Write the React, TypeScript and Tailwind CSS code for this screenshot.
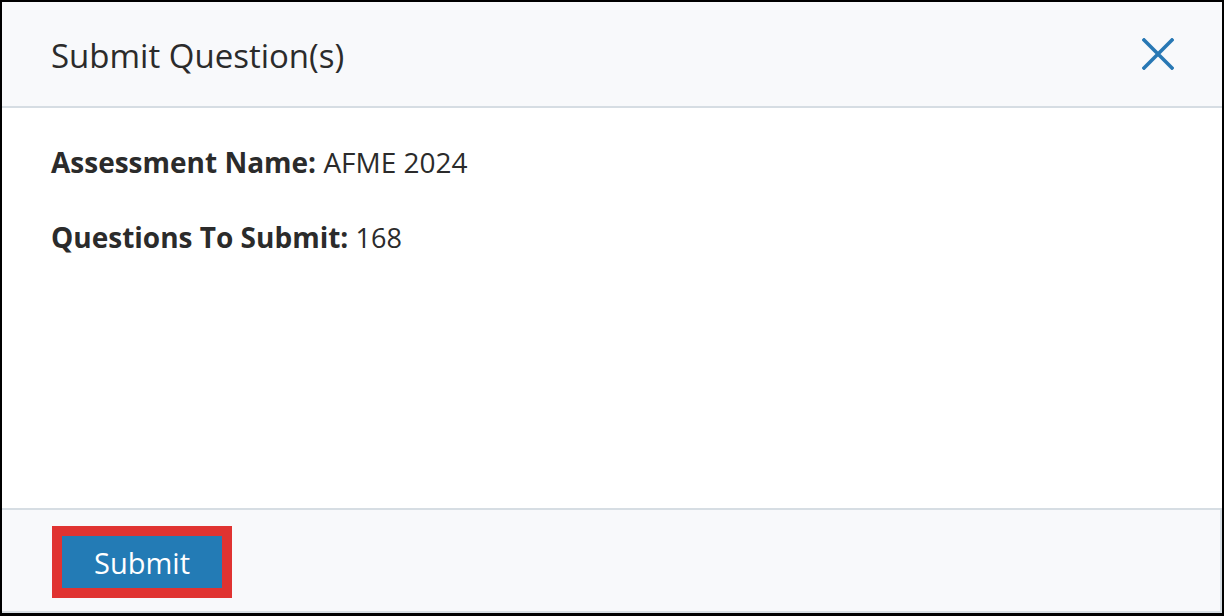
import React from 'react';

const SubmitQuestionsDialog: React.FC = () => {
  const assessmentName = 'AFME 2024';
  const questionCount = 168;

  return (
    <div
      className="w-[1224px] h-[616px] flex flex-col border-2 border-b-[3px] border-black bg-white text-[#2b2b2b]"
      style={{ fontFamily: '"Open Sans", "Liberation Sans", sans-serif' }}
    >
      {/* Header */}
      <div className="h-[106px] flex items-center justify-between pl-[49px] pr-[48px] bg-[#f8f9fb] border-b-2 border-[#d6dde3]">
        <h1 className="text-[33px] font-normal leading-none pt-[2px]">Submit Question(s)</h1>
        <button className="text-[#2878b4]" aria-label="Close">
          <svg width="32" height="32" viewBox="0 0 32 32" fill="none">
            <path d="M2 2 L30 30 M30 2 L2 30" stroke="currentColor" strokeWidth="3.6" strokeLinecap="square" />
          </svg>
        </button>
      </div>

      {/* Body */}
      <div className="h-[400px] pl-[49px] pt-[40px] text-[28px] leading-none">
        <p className="h-[75px]">
          <span className="font-bold">Assessment Name:</span> {assessmentName}
        </p>
        <p>
          <span className="font-bold">Questions To Submit:</span>{' '}
          <span className="text-[27px]">{questionCount}</span>
        </p>
      </div>

      {/* Footer */}
      <div className="flex-1 bg-[#f8f9fb] border-t-2 border-r-2 border-b-2 border-[#d6dde3] pl-[50px] pt-[16px]">
        <div className="inline-block border-[10px] border-[#e03331]">
          <button className="w-[160px] h-[52px] bg-[#237bb5] text-white text-[29px] font-normal leading-none">
            Submit
          </button>
        </div>
      </div>
    </div>
  );
};

export default function App() {
  return <SubmitQuestionsDialog />;
}
